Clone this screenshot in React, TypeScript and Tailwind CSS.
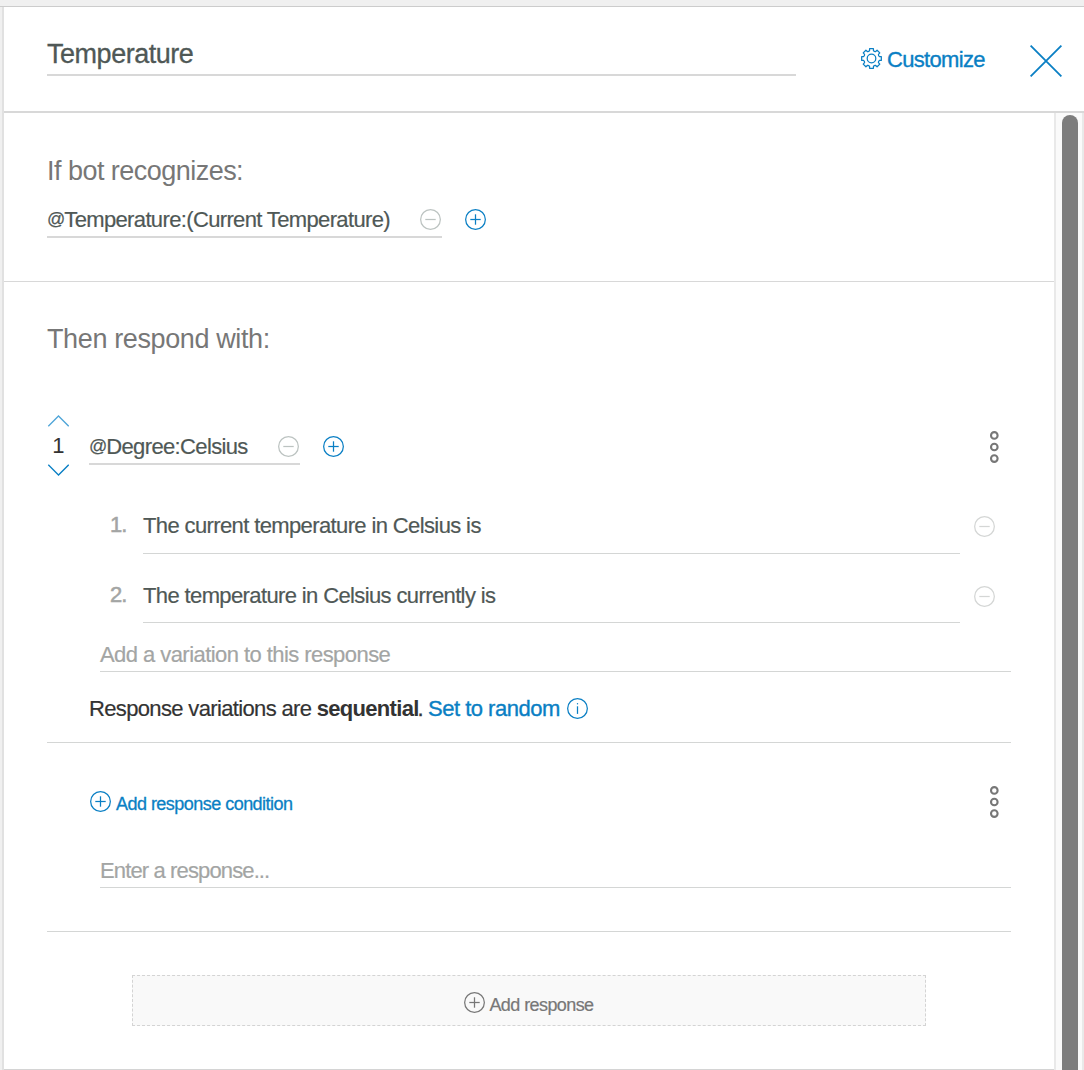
import React from "react";

type IconProps = { className?: string };

function CircleIcon({ sign, className = "" }: IconProps & { sign: "plus" | "minus" | "info" }) {
  return (
    <svg viewBox="0.5 0.5 21 21" className={`h-[21px] w-[21px] shrink-0 ${className}`} fill="none" stroke="currentColor" strokeWidth="1.25">
      <circle cx="11" cy="11" r="9.85" />
      {sign !== "info" && <path d="M5.8 11h10.4" />}
      {sign === "plus" && <path d="M11 5.8v10.4" />}
      {sign === "info" && (
        <>
          <path d="M11 8.8v7.6" />
          <circle cx="11" cy="6.3" r="0.7" fill="currentColor" stroke="none" />
        </>
      )}
    </svg>
  );
}

function GearIcon() {
  const teeth = Array.from({ length: 8 }, (_, i) => {
    const at = (radius: number, deg: number) => {
      const a = ((i * 45 + deg - 90) * Math.PI) / 180;
      return `${(11 + radius * Math.cos(a)).toFixed(2)} ${(11 + radius * Math.sin(a)).toFixed(2)}`;
    };
    return `${i === 0 ? "M" : "L"}${at(8.1, -14)}L${at(10, -11)}L${at(10, 11)}L${at(8.1, 14)}Q${at(7.3, 22.5)} ${at(8.1, 31)}`;
  }).join("");
  return (
    <svg viewBox="0.5 0.5 21 21" className="h-[21px] w-[21px] shrink-0" fill="none" stroke="currentColor" strokeWidth="1.25" strokeLinejoin="round">
      <path d={`${teeth}Z`} />
      <circle cx="11" cy="11" r="4.3" />
    </svg>
  );
}

function Kebab({ className = "" }: IconProps) {
  return (
    <svg viewBox="0 0 10 34" className={`h-[34px] w-[10px] shrink-0 ${className}`} fill="none" stroke="#777" strokeWidth="2.1">
      <circle cx="5.3" cy="5.4" r="3.3" />
      <circle cx="5.3" cy="17" r="3.3" />
      <circle cx="5.3" cy="28.6" r="3.3" />
    </svg>
  );
}

function Chevron({ up = false }: { up?: boolean }) {
  return (
    <svg viewBox="-0.5 0 22 12" className="h-3 w-[22px]" fill="none" stroke={up ? "#4fa5d8" : "#0a7fc4"} strokeWidth="1.3">
      <path d={up ? "M0.8 11.2L11 1L21.2 11.2" : "M0.8 0.8L11 11L21.2 0.8"} />
    </svg>
  );
}

function Condition({ name, className }: { name: string; className: string }) {
  return (
    <div className="flex h-9 items-start">
      <div className={`flex h-9 justify-between border-b-2 border-[#d8d8d8] pr-px text-[#4f5856] ${className}`}>
        <span className="pt-px leading-[33px] tracking-[-0.64px] whitespace-nowrap [-webkit-text-stroke:0.2px_#4f5856]">
          <span className="inline-block -translate-y-[2px] text-[18px] leading-none tracking-[-1px]">@</span>
          {name}
        </span>
        <CircleIcon sign="minus" className="mt-[7px] text-[#bcc3c1]" />
      </div>
      <CircleIcon sign="plus" className="mt-[7px] ml-[23px] text-[#0a7fc4]" />
    </div>
  );
}

function Variation({ index, text, className }: { index: number; text: string; className: string }) {
  return (
    <div className={`flex h-[69px] pl-[63px] ${className}`}>
      <span className="w-[33px] leading-7 tracking-[-1px] text-[#a3a5a4] [-webkit-text-stroke:0.5px_#a3a5a4]">{index}.</span>
      <span className="w-[817px] border-b border-[#d4d6d5] pt-px leading-7 text-[#4f5856] [-webkit-text-stroke:0.2px_#4f5856]">{text}</span>
      <CircleIcon sign="minus" className="mt-[5.4px] ml-[14.4px] text-[#d4d6d5]" />
    </div>
  );
}

export default function App() {
  return (
    <div
      className="flex h-[1070px] w-[1084px] flex-col overflow-hidden bg-[#f0f0f0] text-[22px] tracking-[-0.62px]"
      style={{ fontFamily: '"Liberation Sans", Arial, sans-serif' }}
    >
      <div className="h-[7px] shrink-0 border-b border-[#cccccc] bg-[#f0f0f0]" />
      <div className="ml-0.5 flex flex-1 flex-col border-l-2 border-[#e1e1e1] bg-white">
        <header className="flex h-[106px] shrink-0 items-start border-b-2 border-[#d8d8d8] pl-[43px]">
          <h1 className="mt-[27px] h-[42px] w-[749px] border-b-2 border-[#d8d8d8] text-[27px] leading-10 tracking-[-0.47px] text-[#4f5856] [-webkit-text-stroke:0.3px_#4f5856]">
            Temperature
          </h1>
          <button className="mt-[36px] ml-[65px] flex h-8 w-[125px] items-start gap-[5px] text-[#0a7fc4] [-webkit-text-stroke:0.35px_#0a7fc4]">
            <span className="pt-[5px]">
              <GearIcon />
            </span>
            <span className="pt-px leading-8 tracking-[-0.68px]">Customize</span>
          </button>
          <svg viewBox="0 0 32 32" className="mt-[38px] ml-[44px] h-8 w-8" stroke="#0a7fc4" strokeWidth="1.8">
            <path d="M0.6 0.6L31.4 31.4M31.4 0.6L0.6 31.4" />
          </svg>
        </header>

        <div className="flex flex-1">
          <main className="flex w-[1050px] flex-col border-b border-[#d4d4d4]">
            <section className="h-[169px] border-b border-[#d8d8d8] pt-[42px] pl-[43px]">
              <h2 className="mb-[15px] text-[27px] leading-8 tracking-[-0.53px] text-[#777777]">If bot recognizes:</h2>
              <Condition className="w-[395px]" name="Temperature:(Current Temperature)" />
            </section>

            <section className="px-[43px] pt-[41px]">
              <h2 className="text-[27px] leading-8 tracking-[-0.38px] text-[#777777]">Then respond with:</h2>

              <div className="mt-[60px] flex h-[61px] items-start">
                <div className="flex w-[42px] flex-col items-start">
                  <Chevron up />
                  <span className="h-[37px] w-[22px] pt-px text-center leading-[36px] text-[#333333]">1</span>
                  <Chevron />
                </div>
                <div className="mt-[14px]">
                  <Condition className="w-[211px]" name="Degree:Celsius" />
                </div>
                <Kebab className="mt-[15px] mr-3 ml-auto" />
              </div>

              <div className="flex flex-col pt-[9px]">
                <Variation index={1} text="The current temperature in Celsius is" className="pt-[26px]" />
                <Variation index={2} text="The temperature in Celsius currently is" className="pt-[27px]" />
              </div>

              <div className="ml-[53px] h-[49px] border-b border-[#d4d6d5] pt-[17px] leading-[30px] tracking-[-0.56px] text-[#a3a5a4] [-webkit-text-stroke:0.2px_#a3a5a4]">
                Add a variation to this response
              </div>

              <div className="flex h-[71px] border-b border-[#d4d6d5] pt-[21px] pl-[42px] leading-8 text-[#333333]">
                <p>
                  <span className="tracking-[-0.65px] [-webkit-text-stroke:0.2px_#333333]">Response variations are </span>
                  <strong className="tracking-[-0.7px]">sequential</strong>
                  <span className="-ml-px tracking-[-0.9px] [-webkit-text-stroke:0.3px_#333333]">. </span>
                  <a className="tracking-[-0.5px] text-[#0a7fc4] [-webkit-text-stroke:0.35px_#0a7fc4]">Set to random</a>
                </p>
                <CircleIcon sign="info" className="mt-[5px] ml-[7px] text-[#0a7fc4]" />
              </div>

              <div className="flex h-[96px] items-start pt-[42px] pl-[43px]">
                <button className="flex items-start gap-[5px] text-[18px] leading-6 tracking-[-0.53px] text-[#0a7fc4]">
                  <CircleIcon sign="plus" className="mt-[6px]" />
                  <span className="mt-[7px] [-webkit-text-stroke:0.3px_#0a7fc4]">Add response condition</span>
                </button>
                <Kebab className="mr-3 ml-auto" />
              </div>
              <div className="ml-[53px] h-[49px] border-b border-[#d4d6d5] pt-4 leading-[31px] tracking-[-0.87px] text-[#a3a5a4] [-webkit-text-stroke:0.2px_#a3a5a4]">
                Enter a response...
              </div>
              <div className="h-11 border-b border-[#d4d6d5]" />

              <button className="mt-[43px] ml-[85px] flex h-[51px] w-[794px] items-start justify-center gap-1 border border-dashed border-[#d4d4d4] bg-[#f9f9f9] text-[18px] leading-6 tracking-[-0.58px] text-[#777777]">
                <CircleIcon sign="plus" className="mt-4" />
                <span className="mt-[17px] [-webkit-text-stroke:0.2px_#777777]">Add response</span>
              </button>
            </section>
          </main>
          <div className="flex w-[30px] justify-center border-x-2 border-[#e9e9e9] bg-[#fafafa] pt-0.5 pl-0.5">
            <div className="h-full w-4 rounded-t-full bg-[#7d7d7d]" />
          </div>
        </div>
      </div>
    </div>
  );
}
